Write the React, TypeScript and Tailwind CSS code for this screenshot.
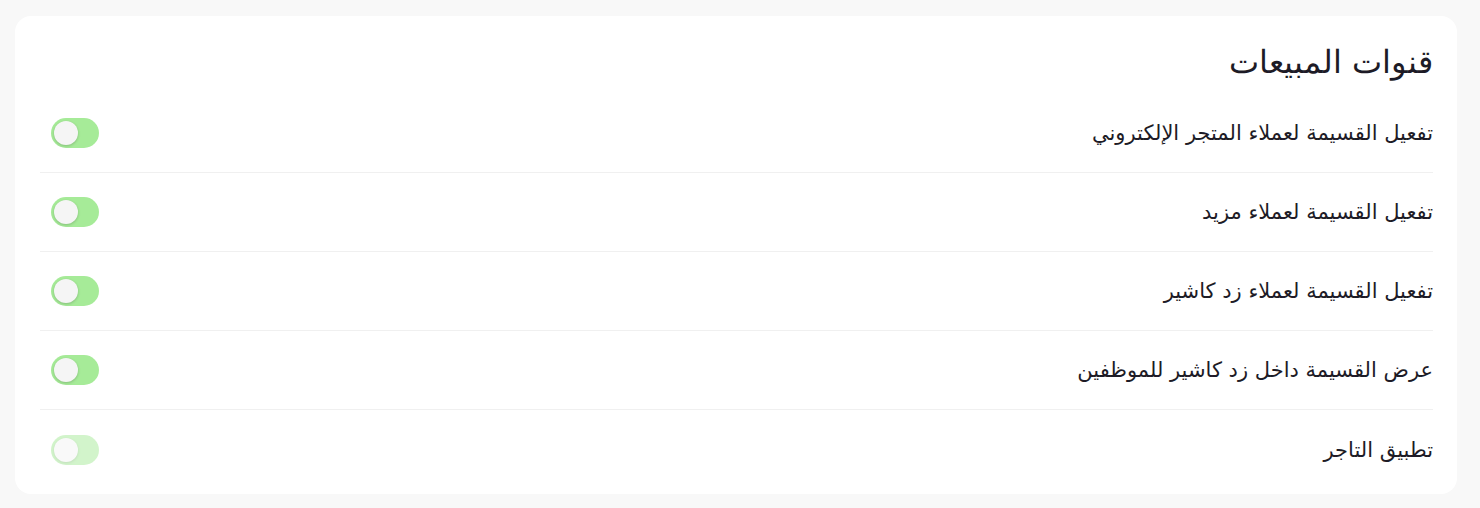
import React from 'react';

interface Channel {
  id: string;
  label: string;
  enabled: boolean;
  disabled?: boolean;
}

const channels: Channel[] = [
  { id: 'store', label: 'تفعيل القسيمة لعملاء المتجر الإلكتروني', enabled: false },
  { id: 'mazeed', label: 'تفعيل القسيمة لعملاء مزيد', enabled: false },
  { id: 'cashier', label: 'تفعيل القسيمة لعملاء زد كاشير', enabled: false },
  { id: 'staff', label: 'عرض القسيمة داخل زد كاشير للموظفين', enabled: false },
  { id: 'merchant', label: 'تطبيق التاجر', enabled: false, disabled: true },
];

function Toggle({ disabled }: { disabled?: boolean }) {
  return (
    <button
      type="button"
      disabled={disabled}
      className={`relative block w-12 h-[30px] rounded-full bg-[#a6eb98] ${disabled ? 'opacity-50' : ''}`}
    >
      <span className="absolute left-[3px] top-[3px] w-6 h-6 rounded-full bg-[#f5f5f5] shadow-[0_1px_3px_rgba(0,0,0,0.2)]" />
    </button>
  );
}

export default function App() {
  return (
    <div dir="rtl" className="min-h-[508px] bg-[#f8f8f8] pl-[15px] pr-[23px] pt-4 pb-[15px]" style={{ fontFamily: '"DejaVu Sans", "Noto Sans", sans-serif' }}>
      <div className="bg-white rounded-2xl pr-[24px] pl-[25px] pt-[26px] pb-[5px]">
        <h2 className="text-[32px] leading-10 text-[#1d1b26] h-[52px] font-light">قنوات المبيعات</h2>
        <div>
          {channels.map((c, i) => (
            <div
              key={c.id}
              className={`flex items-center justify-between h-[79px] ${i < channels.length - 1 ? 'border-b border-[#f0f0f0]' : ''}`}
            >
              <span className="text-[21px] leading-7 text-[#1d1b26]">{c.label}</span>
              <div className="flex pl-[11px]">
                <Toggle disabled={c.disabled} />
              </div>
            </div>
          ))}
        </div>
      </div>
    </div>
  );
}
